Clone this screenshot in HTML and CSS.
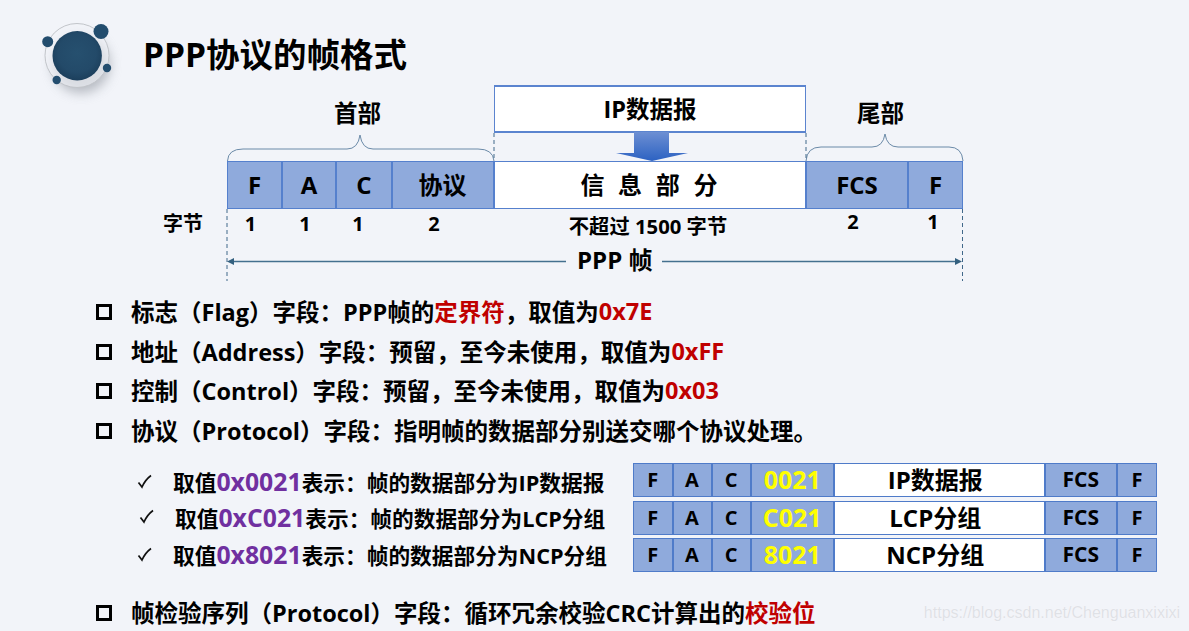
FILE: index.html
```html
<!DOCTYPE html>
<html lang="zh-CN">
<head>
<meta charset="utf-8">
<title>PPP协议的帧格式</title>
<link rel="stylesheet" href="styles.css">
</head>
<body>
<main class="slide">
  <header class="head">
    <svg class="logo" viewBox="20 15 110 70" width="110" height="70" aria-hidden="true">
      <defs>
        <radialGradient id="ball" cx="50%" cy="45%" r="55%">
          <stop offset="0" stop-color="#26506f"/>
          <stop offset=".7" stop-color="#234a69"/>
          <stop offset="1" stop-color="#1c3f5c"/>
        </radialGradient>
        <filter id="soft" x="-50%" y="-50%" width="200%" height="200%"><feGaussianBlur stdDeviation="6"/></filter>
      </defs>
      <circle cx="81" cy="64" r="29" fill="#8d939c" opacity=".6" filter="url(#soft)"/>
      <circle cx="77" cy="55.500" r="32" fill="#f2f4f9" fill-opacity=".6" stroke="#c2c5ca" stroke-width="1"/>
      <circle cx="77.200" cy="55.700" r="24.700" fill="url(#ball)"/>
      <circle cx="101" cy="31.500" r="7.500" fill="#234d6e"/>
      <circle cx="47.700" cy="41.700" r="5.500" fill="#234d6e"/>
      <circle cx="107" cy="68" r="4.200" fill="#234d6e"/>
      <circle cx="56.700" cy="80" r="4.200" fill="#234d6e"/>
    </svg>
    <h1 class="title">PPP协议的帧格式</h1>
  </header>

  <section class="frame">
    <div class="top top-head">首部</div>
    <div class="top-ip">IP数据报</div>
    <div class="top top-tail">尾部</div>

    <div class="cell c-2">F</div>
    <div class="cell c-3">A</div>
    <div class="cell c-4">C</div>
    <div class="cell c-5 pad-proto">协议</div>
    <div class="cell c-6 cell-white">信 息 部 分</div>
    <div class="cell c-7">FCS</div>
    <div class="cell c-8">F</div>

    <div class="byte-label">字节</div>
    <div class="num num-a">1</div>
    <div class="num num-b">1</div>
    <div class="num num-c">1</div>
    <div class="num num-d">2</div>
    <div class="num num-e">不超过 1500 字节</div>
    <div class="num num-f">2</div>
    <div class="num num-g">1</div>

    <div class="ppp">PPP 帧</div>

    <svg class="frame-lines" viewBox="163 85 801 197" width="801" height="197" aria-hidden="true">
      <defs>
        <linearGradient id="down" x1="0" y1="0" x2="0" y2="1">
          <stop offset="0" stop-color="#6d8fd3"/>
          <stop offset="1" stop-color="#2c62c2"/>
        </linearGradient>
      </defs>
      <path class="brace" d="M227.500 161Q228 149 243 149L347 149Q358 149 360 135Q362 149 373 149L478 149Q493 149 494 161"/>
      <path class="brace" d="M806 161Q807 147 821 147L872 147Q883 147 885 134Q887 147 898 147L949 147Q962 147 963 161"/>
      <path class="dash" d="M227 209V281M494 133V161M806 133V161M962.500 209V281"/>
      <path class="arrow-line" d="M232 261.500H566M662 261.500H957"/>
      <path class="arrow-head" d="M227 261.500L234 258V265ZM962 261.500L955 258V265Z"/>
      <path fill="url(#down)" d="M634 132H669V153H688L652 161L616 153H634Z"/>
    </svg>
  </section>

  <ul class="points">
    <li class="point">标志（Flag）字段：PPP帧的<em class="red">定界符</em>，取值为<em class="red">0x7E</em></li>
    <li class="point">地址（Address）字段：预留，至今未使用，取值为<em class="red">0xFF</em></li>
    <li class="point">控制（Control）字段：预留，至今未使用，取值为<em class="red">0x03</em></li>
    <li class="point">协议（Protocol）字段：指明帧的数据部分别送交哪个协议处理。</li>
  </ul>

  <div class="options">
    <div class="option option-first">
      <p class="opt-text">
        <svg class="check" viewBox="0 0 15 15" width="15" height="15" aria-hidden="true"><path d="M1.500 8.500L5 13C7 8.500 10 4.500 14 1.500"/></svg>
        <span>取值<em class="purple">0x0021</em>表示：帧的数据部分为IP数据报</span>
      </p>
      <div class="bar">
        <span class="b b-f">F</span><span class="b b-a">A</span><span class="b b-c">C</span><span class="b b-p">0021</span><span class="b b-d">IP数据报</span><span class="b b-s">FCS</span><span class="b b-e">F</span>
      </div>
    </div>
    <div class="option option-shift">
      <p class="opt-text">
        <svg class="check" viewBox="0 0 15 15" width="15" height="15" aria-hidden="true"><path d="M1.500 8.500L5 13C7 8.500 10 4.500 14 1.500"/></svg>
        <span>取值<em class="purple">0xC021</em>表示：帧的数据部分为LCP分组</span>
      </p>
      <div class="bar">
        <span class="b b-f">F</span><span class="b b-a">A</span><span class="b b-c">C</span><span class="b b-p">C021</span><span class="b b-d">LCP分组</span><span class="b b-s">FCS</span><span class="b b-e">F</span>
      </div>
    </div>
    <div class="option">
      <p class="opt-text">
        <svg class="check" viewBox="0 0 15 15" width="15" height="15" aria-hidden="true"><path d="M1.500 8.500L5 13C7 8.500 10 4.500 14 1.500"/></svg>
        <span>取值<em class="purple">0x8021</em>表示：帧的数据部分为NCP分组</span>
      </p>
      <div class="bar">
        <span class="b b-f">F</span><span class="b b-a">A</span><span class="b b-c">C</span><span class="b b-p">8021</span><span class="b b-d">NCP分组</span><span class="b b-s">FCS</span><span class="b b-e">F</span>
      </div>
    </div>
  </div>

  <ul class="points points-last">
    <li class="point">帧检验序列（Protocol）字段：循环冗余校验CRC计算出的<em class="red">校验位</em></li>
  </ul>

  <div class="watermark">https://blog.csdn.net/Chenguanxixixi</div>
</main>
</body>
</html>
```

FILE: styles.css
```css
*, *::before { box-sizing: border-box; }
html, body { margin: 0; padding: 0; height: 100%; overflow: hidden; }
body {
  background: #f2f4f9;
  color: #000;
  font-family: "Open Sans", "Noto Sans CJK SC", sans-serif;
  font-weight: 700;
}
em { font-style: normal; }
.red { color: #c00000; }
.purple { color: #7030a0; }

.slide { position: relative; width: 1189px; height: 631px; overflow: hidden; }

/* header */
.head { display: flex; align-items: center; height: 85px; padding: 15px 0 0 20px; }
.logo { overflow: visible; flex: none; }
.title { margin: 8px 0 0 13px; font-size: 33.500px; line-height: 40px; font-weight: 700; }

/* frame diagram */
.frame {
  position: relative;
  width: 801px;
  margin-left: 163px;
  display: grid;
  grid-template-columns: 64px 55px 54px 56px 102px 312px 102px 55px;
  grid-template-rows: 76px 48px 35px 38px;
}
.frame-lines { position: absolute; left: 0; top: 0; pointer-events: none; }
.brace { fill: none; stroke: #6b8aa8; stroke-width: 1; }
.dash { fill: none; stroke: #41688a; stroke-width: 1; stroke-dasharray: 4 3; }
.arrow-line { fill: none; stroke: #44708f; stroke-width: 1.500; }
.arrow-head { fill: #34607f; }

.top { font-size: 23.500px; line-height: 30px; padding-top: 13px; text-align: center; }
.top-head { grid-column: 2 / 6; grid-row: 1; padding-right: 6px; }
.top-tail { grid-column: 7 / 9; grid-row: 1; padding-right: 8px; }
.top-ip {
  grid-column: 6; grid-row: 1;
  height: 48px;
  background: #fff;
  border: 1px solid #5b84cf;
  border-width: 2px 1px;
  font-size: 23.500px;
  line-height: 44px;
  text-align: center;
}
.cell {
  grid-row: 2;
  background: #8faadc;
  border: 1px solid #5580cd;
  font-size: 24px;
  line-height: 45px;
  text-align: center;
}
.c-2 { grid-column: 2; }
.c-3 { grid-column: 3; }
.c-4 { grid-column: 4; }
.c-5 { grid-column: 5; }
.c-6 { grid-column: 6; word-spacing: 7.500px; padding-right: 2px; }
.c-7 { grid-column: 7; }
.c-8 { grid-column: 8; }
.pad-proto { padding-right: 1px; }
.cell-white { background: #fff; }

.byte-label { font-size: 20px; line-height: 30px; grid-row: 3; grid-column: 1; }
.num { grid-row: 3; font-size: 20px; line-height: 30px; text-align: center; }
.num-a { grid-column: 2; padding-right: 8px; }
.num-b { grid-column: 3; padding-right: 8px; }
.num-c { grid-column: 4; padding-right: 12px; }
.num-d { grid-column: 5; padding-right: 18px; }
.num-e { grid-column: 6; padding-right: 4px; padding-top: 2px; font-size: 20.300px; }
.num-f { grid-column: 7; padding-right: 8px; margin-top: -2px; }
.num-g { grid-column: 8; padding-right: 5px; margin-top: -2px; }
.ppp {
  grid-row: 4; grid-column: 2 / 9;
  padding-left: 350px;
  font-size: 24px;
  line-height: 32px;
}

/* bullet lists */
.points { list-style: none; margin: 9px 0 0; padding: 0 0 0 96px; }
.point { display: flex; align-items: center; height: 39.800px; font-size: 23.500px; white-space: pre; }
.point::before {
  content: "";
  flex: none;
  width: 16px;
  height: 16px;
  margin: 2px 19px 0 0;
  border: 3px solid #000;
}
.points-last { margin-top: 20px; }

/* value rows */
.options { display: flex; flex-direction: column; gap: 3.500px; margin-top: 13px; padding-left: 137px; }
.option { display: flex; align-items: center; height: 34px; }
.opt-text { display: flex; align-items: center; width: 496px; margin: 0; padding-bottom: 2px; font-size: 21.700px; white-space: nowrap; }
.option-first .opt-text { padding: 2px 0 0; }
.opt-text .purple { font-size: 24.800px; }
.check { flex: none; margin-right: 21px; }
.check path { fill: none; stroke: #111; stroke-width: 1.700; }
.option-shift .opt-text { padding-left: 2px; }
.bar { display: flex; width: 524px; height: 34px; flex: none; }
.b {
  background: #8faadc;
  border: 1px solid #4f7bc9;
  font-size: 20px;
  line-height: 31px;
  text-align: center;
}
.b-f { width: 39.500px; }
.b-a { width: 39px; }
.b-c { width: 39px; }
.b-p { width: 83.500px; color: #ff0; font-size: 25px; }
.b-d { width: 210.500px; background: #fff; font-size: 24px; padding-right: 8px; }
.b-s { width: 72.500px; font-size: 21px; }
.b-e { width: 40px; }

.watermark {
  position: absolute;
  right: 9px;
  top: 603px;
  font-family: "Liberation Sans", sans-serif;
  font-weight: 400;
  font-size: 16px;
  line-height: 20px;
  color: #dfe1e6;
  text-shadow: 0 0 1px #fff;
}
```
